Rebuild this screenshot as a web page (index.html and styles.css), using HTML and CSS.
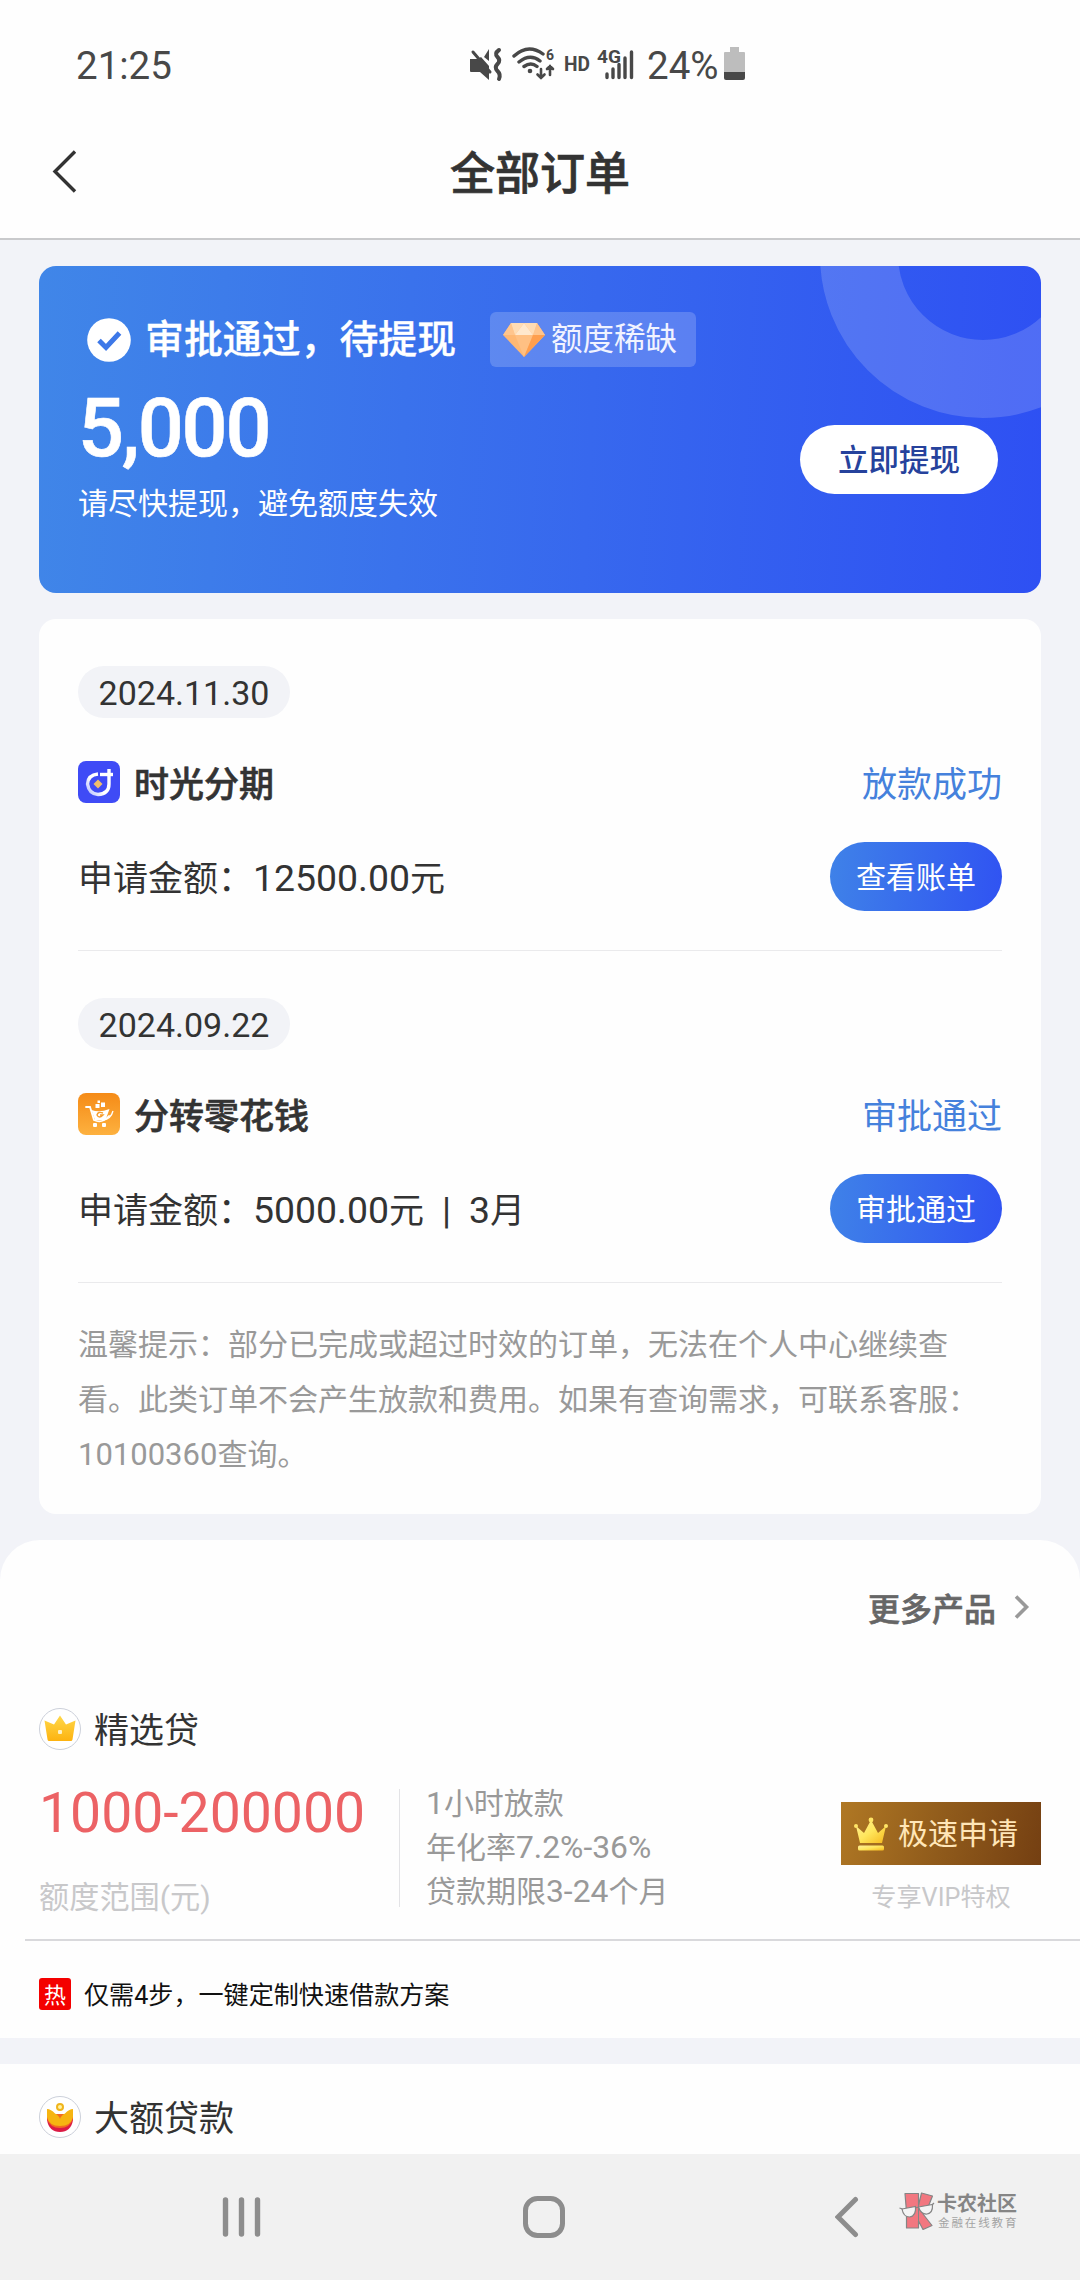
FILE: index.html
```html
<!DOCTYPE html>
<html lang="zh-CN">
<head>
<meta charset="utf-8">
<title>全部订单</title>
<link rel="stylesheet" href="styles.css">
</head>
<body>
<div class="screen">
  <header class="header">
    <div class="status">
      <span class="clock">21:25</span>
      <svg class="status-icons" width="173" height="40" viewBox="465 44 173 40" fill="#484848">
        <path d="M469 58h8l3-2 8 9v14l-9-8h-9q-1 0-1-1z"/>
        <path d="M483 56l5-8v12z"/>
        <path d="M472 51l17 20" stroke="#484848" stroke-width="3" stroke-linecap="round"/>
        <path d="M498 49q-5 3.500-1.500 7t0 7 0 7 1.500 8" fill="none" stroke="#484848" stroke-width="4" stroke-linecap="round"/>
        <g fill="none" stroke="#484848" stroke-width="3.400" stroke-linecap="round">
          <path d="M513 55q14-13 29-2M518 61q11-9 21-1M523 65.500q7-5 13 0" />
          <path d="M540 68v9m-3.500-3.500l3.500 3.500 3.500-3.500M549 74v-9m-3 3l3-3 3 3" stroke-width="2.600"/>
        </g>
        <circle cx="529" cy="70" r="2.300"/>
        <text x="545" y="59" font-size="14" font-weight="700">6</text>
        <text x="563" y="70" font-size="20.500" font-weight="700" textLength="26" lengthAdjust="spacingAndGlyphs">HD</text>
        <text x="596" y="62" font-size="19" font-weight="700" textLength="24" lengthAdjust="spacingAndGlyphs">4G</text>
        <g stroke="#484848" stroke-width="3.400" stroke-linecap="round"><path d="M606 73v3.500M612 68v8.500M618 63.500v13M624 57v19.500M630.500 51v25.500"/></g>
      </svg>
      <span class="percent">24%</span>
      <svg class="battery" width="22" height="34" viewBox="0 0 22 34">
        <path d="M6 0h9v5h5q1 0 1 1v20H0V6q0-1 1-1h5z" fill="#bdbdbd"/>
        <path d="M0 25h21v6q0 2-2 2H2q-2 0-2-2z" fill="#484848"/>
      </svg>
    </div>
    <div class="titlebar">
      <svg class="back" width="30" height="48" viewBox="50 147 30 48"><path d="M75 151.500L55 171.500l20 20" fill="none" stroke="#333" stroke-width="3.400"/></svg>
      <h1 class="title">全部订单</h1>
    </div>
  </header>

  <section class="hero">
    <svg class="ring" width="221" height="152" viewBox="820 266 221 152"><circle cx="983" cy="255" r="124" fill="none" stroke="#fff" stroke-opacity=".16" stroke-width="78"/></svg>
    <div class="hero-main">
      <div class="hero-head">
        <svg width="44" height="44" viewBox="0 0 44 44"><circle cx="22" cy="22" r="21.800" fill="#fff"/><path d="M12 22.500l7 7L32.500 15" fill="none" stroke="#3d78e8" stroke-width="5"/></svg>
        <span class="hero-title">审批通过，待提现</span>
        <span class="scarce">
          <svg width="42" height="34" viewBox="0 0 42 34"><path d="M8 0h26l8 12-21 22L0 12z" fill="#ffb873"/><path d="M8 0l4 12H0zM34 0l-4 12h12z" fill="#ffc58d"/><path d="M8 0h13l-9 12zM34 0H21l9 12z" fill="#ffdcb4"/><path d="M21 0l9 12H12z" fill="#ffe8cd"/><path d="M12 12h18l-9 22z" fill="#ffc083"/><path d="M30 12h12L21 34z" fill="#ff9f4e"/></svg>
          <span>额度稀缺</span>
        </span>
      </div>
      <div class="hero-amount">5,000</div>
      <div class="hero-note">请尽快提现，避免额度失效</div>
    </div>
    <a class="withdraw">立即提现</a>
  </section>

  <main class="orders">
    <article class="order">
      <span class="date">2024.11.30</span>
      <div class="row product">
        <svg width="42" height="42" viewBox="0 0 42 42">
          <defs><linearGradient id="swirl" x1="1" y1="0" x2="0" y2="1"><stop offset="0" stop-color="#fff"/><stop offset=".6" stop-color="#fff"/><stop offset="1" stop-color="#b3bcff"/></linearGradient></defs>
          <rect width="42" height="42" rx="8" fill="#3f4bf6"/>
          <path d="M20 13q-10 1-10.500 10Q11 33 20 33.500 31 33 31 23V8" fill="none" stroke="url(#swirl)" stroke-width="3.400"/>
          <path d="M22 13.500h13" stroke="#fff" stroke-width="3.400"/>
          <path d="M20 18.500l4.500 4.500-4.500 4.500-4.500-4.500z" fill="#efbd6b"/>
        </svg>
        <h2 class="name">时光分期</h2>
        <span class="state">放款成功</span>
      </div>
      <div class="row">
        <p class="sum">申请金额：<span class="num">12500.00</span>元</p>
        <a class="action">查看账单</a>
      </div>
    </article>
    <article class="order">
      <span class="date">2024.09.22</span>
      <div class="row product">
        <svg width="42" height="42" viewBox="0 0 42 42">
          <defs><linearGradient id="cart" x2="0" y2="1"><stop stop-color="#f58b17"/><stop offset="1" stop-color="#fdb13f"/></linearGradient></defs>
          <rect width="42" height="42" rx="8" fill="url(#cart)"/>
          <path d="M8 14h4l4 13q8 4 15-4" fill="none" stroke="#fff" stroke-width="1.800" stroke-linecap="round"/>
          <path d="M13.500 17q8 3 18-1l-4 11H17z" fill="#fff"/>
          <path d="M25 20q-5-2-6 2 2 4 6 0h-3" fill="none" stroke="#f79d2c" stroke-width="1.400"/>
          <path d="M35 18q-2 8-10 9" fill="none" stroke="#fff" stroke-width="1.300"/>
          <rect x="17.500" y="11" width="4" height="4" fill="#fff"/><rect x="23" y="9.500" width="4" height="4.500" fill="#fff"/><rect x="19.500" y="7.500" width="2.500" height="2.500" fill="#fff"/>
          <rect x="15" y="30" width="4" height="4" rx="1" fill="#fff"/><rect x="24" y="30" width="4" height="4" rx="1" fill="#fff"/>
        </svg>
        <h2 class="name">分转零花钱</h2>
        <span class="state">审批通过</span>
      </div>
      <div class="row">
        <p class="sum">申请金额：<span class="num">5000.00</span>元<span class="bar">|</span><span class="num">3</span>月</p>
        <a class="action">审批通过</a>
      </div>
    </article>
    <p class="tips">温馨提示：部分已完成或超过时效的订单，无法在个人中心继续查<br>看。此类订单不会产生放款和费用。如果有查询需求，可联系客服：<br><span class="phone">10100360</span>查询。</p>
  </main>

  <section class="more">
    <a class="more-link">更多产品
      <svg width="16" height="26" viewBox="0 0 16 26"><path d="M2 2.500L12.500 13 2 23.500" fill="none" stroke="#999" stroke-width="3.600"/></svg>
    </a>
    <div class="loan-head">
      <svg width="42" height="42" viewBox="0 0 42 42">
        <defs><linearGradient id="crown" x2="0" y2="1"><stop stop-color="#ffd84a"/><stop offset="1" stop-color="#fdb310"/></linearGradient></defs>
        <circle cx="21" cy="21" r="20.500" fill="#fff" stroke="#ccd0da"/>
        <path d="M5.500 12.500l9.500 4 6-9 6 9 9.500-4-3 19q-.3 1.500-1.500 1.500H10q-1.200 0-1.500-1.500z" fill="url(#crown)"/>
        <rect x="19" y="22" width="4" height="4" rx="1" fill="#fff2c4"/>
      </svg>
      <h3 class="loan-name">精选贷</h3>
    </div>
    <div class="loan">
      <div class="range">
        <div class="range-value">1000-200000</div>
        <div class="range-label">额度范围(元)</div>
      </div>
      <ul class="terms">
        <li><span class="digits">1</span>小时放款</li>
        <li>年化率<span class="digits">7.2%-36%</span></li>
        <li>贷款期限<span class="digits">3-24</span>个月</li>
      </ul>
      <div class="apply-box">
        <a class="apply">
          <svg width="34" height="34" viewBox="0 0 34 34">
            <defs><linearGradient id="gold" x2="1" y2="1"><stop stop-color="#fff09a"/><stop offset=".5" stop-color="#ffe65c"/><stop offset="1" stop-color="#f6b91d"/></linearGradient></defs>
            <path d="M2 9l8 7 7-13 7 13 8-7-4 17H6z" fill="url(#gold)"/><g fill="#ffe566"><circle cx="2" cy="9" r="2"/><circle cx="17" cy="3" r="2.400"/><circle cx="32" cy="9" r="2"/></g><rect x="4" y="28.500" width="26" height="5" rx="1.500" fill="url(#gold)"/>
          </svg>
          <span>极速申请</span>
        </a>
        <span class="vip">专享VIP特权</span>
      </div>
    </div>
    <div class="hot-row"><span class="hot">热</span><span class="hot-text">仅需4步，一键定制快速借款方案</span></div>
  </section>

  <section class="large">
    <div class="loan-head">
      <svg width="42" height="42" viewBox="0 0 42 42">
        <circle cx="21" cy="21" r="20.500" fill="#fff" stroke="#ccd0da"/>
        <path d="M8 20v4q2 12 13 12t13-12v-4z" fill="#dc1b45"/>
        <path d="M8 18v5q3 9 13 9t13-9v-5z" fill="#f26a22"/>
        <path d="M8 13q4 0 8 4.500 4 2 5 5.500 1-3.500 5-5.500 4-4.500 8-4.500v8q-2 9-13 9T8 21z" fill="#f6b511"/>
        <circle cx="21" cy="11" r="3" fill="#fff3a5" stroke="#f0b51c" stroke-width="2"/>
      </svg>
      <h3 class="loan-name">大额贷款</h3>
    </div>
  </section>

  <footer class="navbar">
    <svg width="40" height="42" viewBox="0 0 40 42"><path d="M4.500 4v34M20.500 4v34M36.500 4v34" stroke="#8d8d8d" stroke-width="5.400" stroke-linecap="round"/></svg>
    <svg class="home" width="42" height="42" viewBox="0 0 42 42"><rect x="2.500" y="2.500" width="37" height="37" rx="12" fill="none" stroke="#8d8d8d" stroke-width="5"/></svg>
    <svg class="nav-back" width="24" height="42" viewBox="0 0 24 42"><path d="M20.500 3.500L3 21l17.500 17.500" fill="none" stroke="#8d8d8d" stroke-width="5" stroke-linecap="round"/></svg>
    <div class="brand">
      <svg width="36" height="38" viewBox="899 2191 36 38">
        <g fill="#f27780" stroke="#858585" stroke-width="1.200" stroke-linejoin="round">
          <path d="M905 2192.500h13.500v12l3-12.500 11 3-6 15-3.500 3 9 11.500-9 4-4.500-8.500v7h-12v-16z"/>
        </g>
        <path d="M918.500 2204v16" stroke="#858585" stroke-width="1"/>
        <g fill="#f4f4f4" stroke="#858585" stroke-width="1.200"><path d="M902 2208l13.500-2.500q1 9.500-6 10.500-6 0-7.500-8zM918.500 2206l14-2.500q.5 8.500-5.500 9.500-6 .5-8.500-7z"/><path d="M899.500 2207l3 1M915 2207l4-1M932 2204l2-2" fill="none"/></g>
      </svg>
      <div class="brand-text"><span class="brand-name">卡农社区</span><span class="brand-sub">金融在线教育</span></div>
    </div>
  </footer>
</div>
</body>
</html>
```

FILE: styles.css
```css
* { box-sizing: border-box; margin: 0; padding: 0; }
body { background: #f2f3f8; font-family: Roboto, "Noto Sans CJK SC", sans-serif; color: #333; }
svg { display: block; flex: none; }
ul { list-style: none; }
.screen { width: 1080px; height: 2280px; overflow: hidden; display: flex; flex-direction: column; white-space: nowrap; }

.header { height: 240px; flex: none; background: #fefefe; border-bottom: 2px solid #c9cacc; }
.status { height: 104px; padding: 27px 0 0 76px; display: flex; align-items: center; color: #484848; font-size: 38.500px; line-height: 80px; }
.clock { width: 390px; }
.status-icons { margin-bottom: 1px; }
.percent { width: 76px; margin-left: 8px; }
.battery { margin-left: 1px; margin-bottom: 4px; }
.titlebar { height: 134px; padding: 0 50px; display: grid; grid-template-columns: 1fr auto 1fr; align-items: center; }
.title { padding-top: 8px; font-size: 45px; line-height: 60px; font-weight: 500; -webkit-text-stroke: .7px; }

.hero { position: relative; overflow: hidden; flex: none; height: 327px; margin: 26px 39px 0; padding: 46px 43px 0 39px; border-radius: 17px; background: linear-gradient(93deg, #4086e8, #3768ee 55%, #2e50f3); color: #fff; display: flex; justify-content: space-between; }
.ring { position: absolute; top: 0; right: 0; }
.hero-head { display: flex; align-items: center; height: 55px; padding-left: 9px; }
.hero-title { width: 312px; margin-left: 14px; font-size: 38.900px; line-height: 55px; font-weight: 500; -webkit-text-stroke: .3px; }
.scarce { margin-left: 33px; width: 206px; height: 55px; padding-left: 13px; border-radius: 6px; background: rgba(255,255,255,.19); display: flex; align-items: center; gap: 6px; font-size: 31.500px; line-height: 55px; color: #f1f3ff; }
.hero-amount { margin: 22px 0 0; font-size: 81px; line-height: 80px; font-weight: 500; letter-spacing: -2.200px; -webkit-text-stroke: .6px; }
.hero-note { margin-top: 15px; font-size: 30px; line-height: 40px; }
.withdraw { position: relative; width: 198px; height: 69px; margin-top: 113px; border-radius: 35px; background: #fff; color: #26429c; font-size: 30.500px; line-height: 72px; font-weight: 500; text-align: center; }

.orders { flex: none; height: 895px; margin: 26px 39px 0; padding: 0 39px; border-radius: 17px; background: #fefefe; }
.order { height: 332px; padding-top: 47px; border-bottom: 1px solid #eaeaec; }
.date { display: block; width: 212px; height: 52px; border-radius: 26px; background: #f2f3f7; font-size: 34px; line-height: 55px; text-align: center; }
.row { display: flex; align-items: center; justify-content: space-between; }
.product { height: 42px; margin: 43px 0 39px; }
.name { margin-left: 14px; padding-top: 7px; font-size: 35px; line-height: 42px; font-weight: 500; -webkit-text-stroke: .6px; }
.state { margin-left: auto; padding-top: 7px; font-size: 35px; line-height: 42px; color: #4581dc; }
.sum { height: 69px; font-size: 35px; line-height: 73px; }
.num { font-size: 37.400px; }
.bar { margin: 0 18px; font-size: 37px; }
.action { width: 172px; height: 69px; border-radius: 35px; background: linear-gradient(95deg, #3f82e8, #3053f2); color: #fff; font-size: 30px; line-height: 71px; text-align: center; }
.tips { padding-top: 34px; font-size: 30px; line-height: 55px; color: #999; }
.phone { font-size: 31px; }

.more { flex: none; height: 498px; margin-top: 26px; border-radius: 40px 40px 0 0; background: #fefefe; }
.more-link { display: flex; align-items: center; justify-content: flex-end; gap: 18px; height: 134px; padding-right: 50px; font-size: 32px; font-weight: 500; -webkit-text-stroke: .6px; color: #666; }
.loan-head { display: flex; align-items: center; gap: 13px; height: 42px; padding-left: 39px; margin-top: 32px; }
.more .loan-head { margin-top: 34px; }
.loan-name { padding-top: 5px; font-size: 35px; line-height: 42px; font-weight: 400; }
.loan { display: flex; height: 191px; margin-left: 25px; padding: 32px 39px 0 14px; border-bottom: 2px solid #d9d9dc; }
.range { width: 361px; height: 118px; margin-top: 7px; border-right: 1px solid #e3e3e6; }
.range-value { font-size: 55.300px; line-height: 50px; color: #ec6265; }
.range-label { margin-top: 37px; font-size: 30.200px; line-height: 44px; color: #c8c8ca; }
.terms { margin-left: 26px; font-size: 30px; color: #999; }
.terms li { height: 44px; line-height: 43px; }
.digits { font-size: 31.800px; }
.apply-box { margin: 20px 0 0 auto; display: flex; flex-direction: column; align-items: center; }
.apply { width: 200px; height: 63px; padding-left: 13px; display: flex; align-items: center; gap: 10px; background: linear-gradient(105deg, #b07824, #905b1b 50%, #743f12); color: #ffe6b8; font-size: 30px; line-height: 66px; }
.vip { margin-top: 13px; font-size: 25.200px; line-height: 40px; color: #c8c8ca; }
.hot-row { display: flex; align-items: center; gap: 13px; height: 106px; padding-left: 39px; color: #111; font-size: 25.100px; }
.hot { width: 32px; height: 32px; border-radius: 3px; background: #f40000; color: #fff; font-size: 22px; line-height: 36px; text-align: center; }
.hot-text { padding-bottom: 2px; }

.large { flex: none; height: 90px; margin-top: 26px; background: #fefefe; display: flex; }
.navbar { flex: none; height: 126px; padding: 0 61px 0 221px; background: #f1f1f1; display: flex; align-items: center; }
.home { margin-left: 262px; }
.nav-back { margin-left: 270px; }
.brand { display: flex; margin-left: 40px; margin-bottom: 12px; gap: 2px; }
.brand-text { display: flex; flex-direction: column; padding-top: 1px; }
.brand-name { font-size: 20px; line-height: 23px; font-weight: 700; color: #858585; }
.brand-sub { font-size: 11.500px; line-height: 14px; letter-spacing: 1.900px; color: #a4a4a4; padding-left: 1px; }
```
